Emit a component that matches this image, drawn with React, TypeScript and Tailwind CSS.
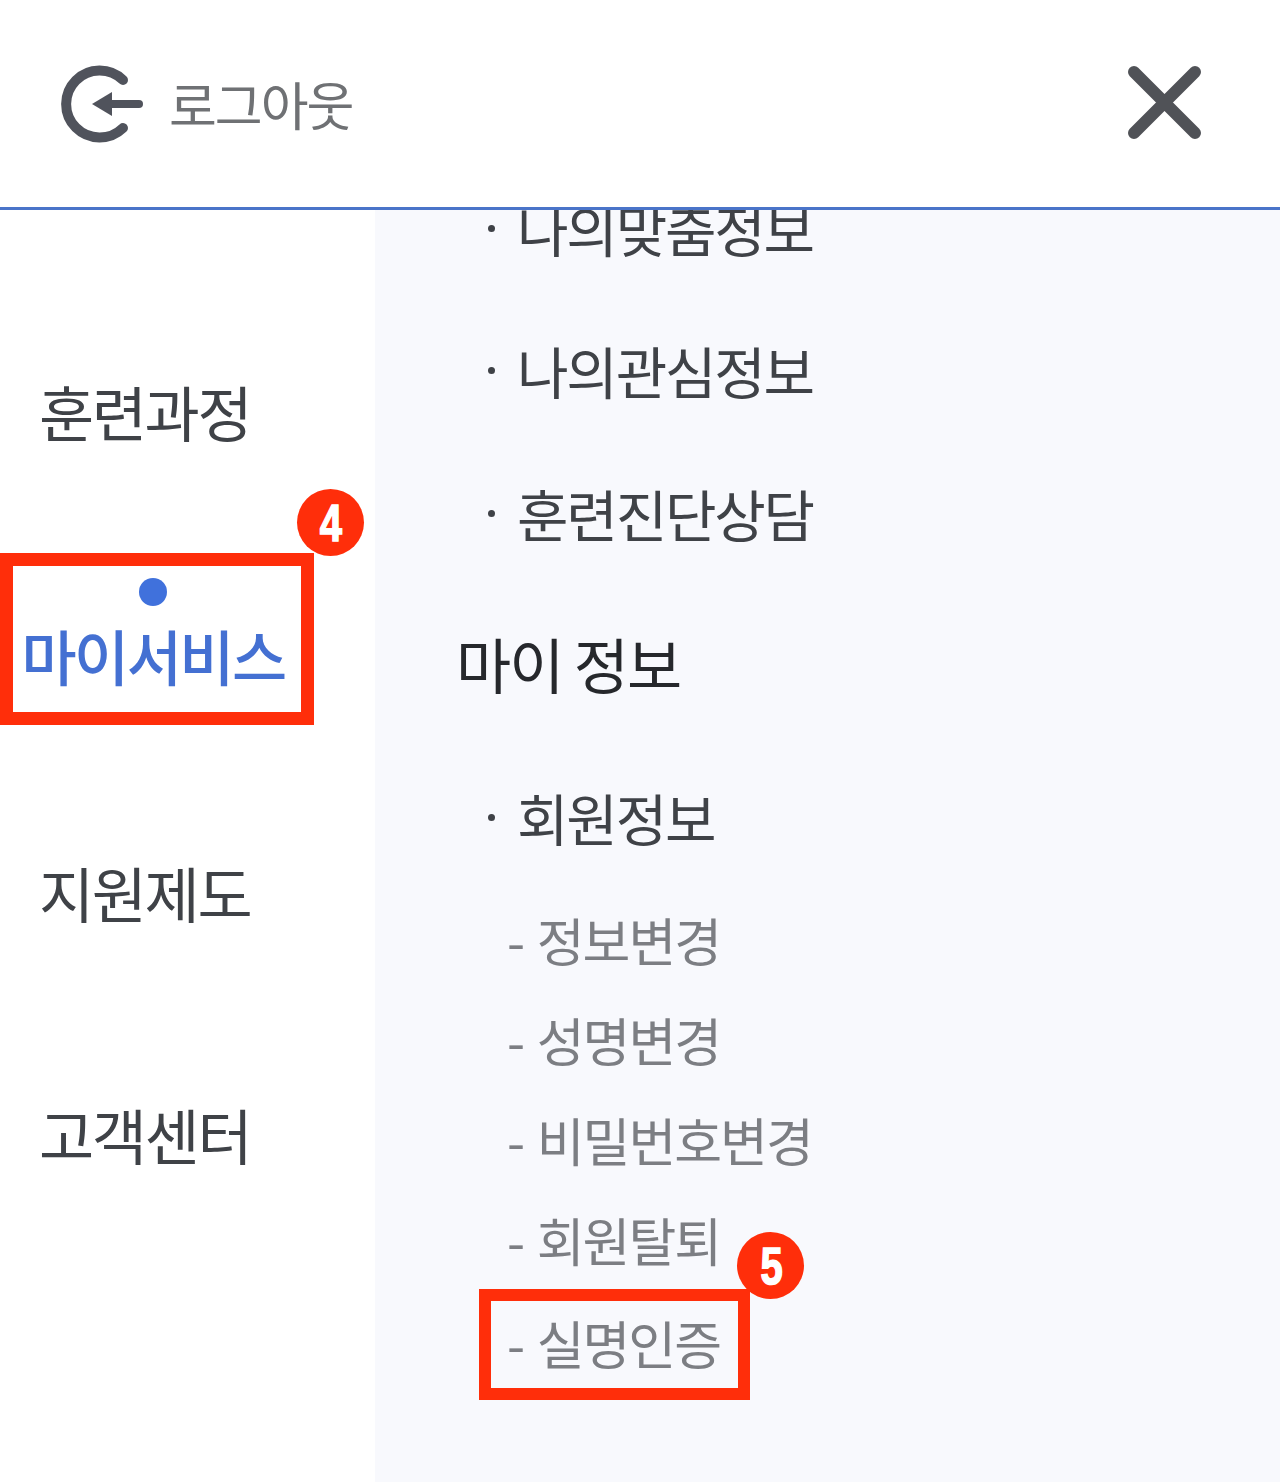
const font = { fontFamily: '"Noto Sans CJK KR", "Noto Sans", sans-serif' };

const subItems = ["정보변경", "성명변경", "비밀번호변경", "회원탈퇴"];

function Badge({ value, className }: { value: string; className: string }) {
  return (
    <span
      className={`absolute flex h-[67px] w-[67px] items-center justify-center rounded-full bg-[#ff2e0a] text-[50px] leading-none font-bold text-white [-webkit-text-stroke:1.5px_white] ${className}`}
      style={{ fontFamily: '"Liberation Sans", sans-serif' }}
    >
      <span className="scale-x-[0.8] scale-y-[1.05]">{value}</span>
    </span>
  );
}

function Dotted({ children, className }: { children: string; className: string }) {
  return (
    <div className={`flex items-center pl-[113px] text-[56px] leading-[70px] tracking-[-2.2px] text-[#3f4247] ${className}`}>
      <span className="mr-[22px] h-[7px] w-[7px] rounded-full bg-[#3f4247]" />
      {children}
    </div>
  );
}

function SideItem({ children, className }: { children: string; className: string }) {
  return (
    <div className={`pl-[39px] text-[60px] leading-[70px] tracking-[-2.4px] text-[#3f4247] ${className}`}>
      {children}
    </div>
  );
}

export default function App() {
  return (
    <div className="flex h-[1482px] w-[1280px] flex-col overflow-hidden bg-white" style={font}>
      {/* Header */}
      <header className="flex h-[210px] shrink-0 items-center justify-between border-b-[3px] border-[#4a74c9] pr-[79px] pl-[58px]">
        <div className="flex items-center">
          <svg width="90" height="80" viewBox="0 0 90 80" fill="none" className="text-[#50535c]">
            <path d="M65 16A33.5 33.5 0 1 0 65 64" stroke="currentColor" strokeWidth="10" strokeLinecap="round" />
            <path d="M48 40H81" stroke="currentColor" strokeWidth="8" strokeLinecap="round" />
            <path d="M34 40L54 28V52Z" fill="currentColor" />
          </svg>
          <span className="ml-[21px] text-[52px] leading-none tracking-[-2px] text-[#6f7174]">로그아웃</span>
        </div>
        <svg width="73" height="73" viewBox="0 0 73 73" fill="none" className="mb-[3px] text-[#505257]">
          <path d="M6 6L67 67M67 6L6 67" stroke="currentColor" strokeWidth="12" strokeLinecap="round" />
        </svg>
      </header>

      <div className="flex min-h-0 flex-1">
        {/* Left menu */}
        <nav className="w-[375px] shrink-0">
          <SideItem className="mt-[166px]">훈련과정</SideItem>
          <div className="relative mt-[107px] flex h-[172px] w-[314px] flex-col items-center border-[13px] border-[#ff2e0a] pr-[8px]">
            <span className="mt-[12px] h-[28px] w-[28px] rounded-full bg-[#4071dc]" />
            <span className="mt-[14px] text-[60px] leading-[70px] font-medium tracking-[-2.6px] text-[#4470d2]">마이서비스</span>
            <Badge value="4" className="top-[-77px] right-[-63px]" />
          </div>
          <SideItem className="mt-[132px]">지원제도</SideItem>
          <SideItem className="mt-[172px]">고객센터</SideItem>
        </nav>

        {/* Right submenu */}
        <main className="min-w-0 flex-1 overflow-hidden bg-[#f8f9fd]">
          <Dotted className="mt-[-17px]">나의맞춤정보</Dotted>
          <Dotted className="mt-[72px]">나의관심정보</Dotted>
          <Dotted className="mt-[73px]">훈련진단상담</Dotted>
          <div className="mt-[80px] pl-[81px] text-[60px] leading-[70px] tracking-[-2px] text-[#26282c]">마이 정보</div>
          <Dotted className="mt-[84px]">회원정보</Dotted>
          <div className="mt-[58px] pl-[132px] text-[52px] leading-[60px] tracking-[-2px] [word-spacing:4px] text-[#7c7e83]">
            {subItems.map((item) => (
              <div key={item} className="mb-[40px]">- {item}</div>
            ))}
          </div>
          <div className="relative mt-[-21px] ml-[104px] flex h-[111px] w-[271px] items-center border-[12px] border-[#ff2e0a] pb-[3px] pl-[16px] text-[52px] leading-[60px] tracking-[-2px] [word-spacing:4px] text-[#7c7e83]">
            - 실명인증
            <Badge value="5" className="top-[-69px] right-[-66px]" />
          </div>
        </main>
      </div>
    </div>
  );
}
